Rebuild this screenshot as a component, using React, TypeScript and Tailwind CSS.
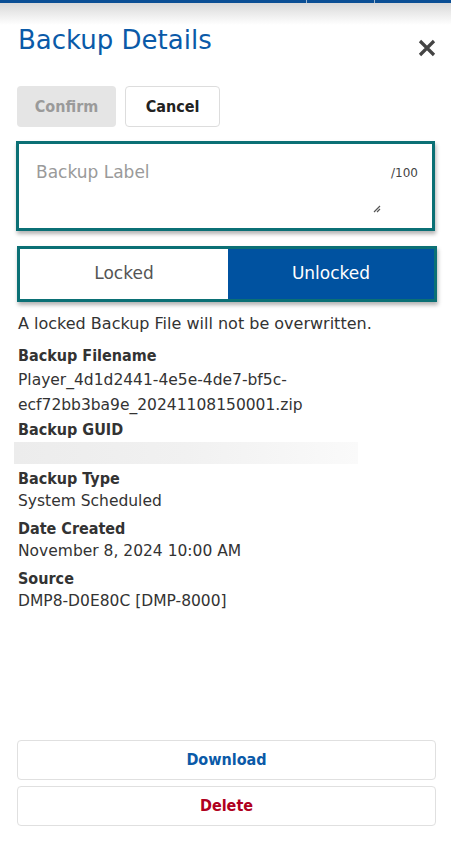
import React from "react";

const font = { fontFamily: '"DejaVu Sans", sans-serif' };
const bold = "[font-family:'DejaVu_Sans_Condensed','DejaVu_Sans',sans-serif] font-bold";

function Field({ label, children }: { label: string; children: React.ReactNode }) {
  return (
    <div className="mt-[6px] first:mt-0">
      <div className={`${bold} text-[16px] leading-[22px] text-[#333]`}>{label}</div>
      <div className="text-[15.5px] leading-[22px] text-[#333]">{children}</div>
    </div>
  );
}

export default function App() {
  return (
    <div className="w-[451px] h-[841px] bg-white flex flex-col relative overflow-hidden" style={font}>
      <div className="h-[3px] bg-[#0b4f95] flex shrink-0">
        <div className="w-[306px]" />
        <div className="w-px bg-[#9fb5cc]" />
        <div className="w-[67px]" />
        <div className="w-px bg-[#9fb5cc]" />
      </div>
      <div className="h-[22px] shrink-0 bg-gradient-to-b from-[#d9d9d9] to-white" />
      <div className="flex justify-between items-start px-[18px]">
        <div className="text-[26px] leading-[32px] text-[#0a5aa8] mt-[-1px]">Backup Details</div>
        <svg width="20" height="20" viewBox="0 0 20 20" className="mt-[13px] mr-[-4px]">
          <path d="M3 3 L17 17 M17 3 L3 17" stroke="#444" strokeWidth="3.2" strokeLinecap="butt" />
        </svg>
      </div>
      <div className="flex gap-[9px] px-[17px] mt-[28px]">
        <button className={`${bold} h-[41px] w-[99px] rounded-[4px] bg-[#e5e5e5] text-[#9a9a9a] text-[16px]`}>Confirm</button>
        <button className={`${bold} h-[41px] w-[95px] rounded-[4px] bg-white border border-[#dddddd] text-[#222] text-[16px]`}>Cancel</button>
      </div>
      <div className="ml-[16px] mr-[16px] mt-[14px] h-[90px] border-[3px] border-[#0b7075] shadow-[1px_3px_4px_rgba(0,0,0,0.3)] relative">
        <div className="absolute left-[17px] top-[16px] text-[17px] text-[#9a9a9a]">Backup Label</div>
        <div className="absolute right-[14px] top-[20px] text-[12px] text-[#444]">/100</div>
        <svg width="8" height="8" viewBox="0 0 8 8" className="absolute left-[354px] top-[61px]">
          <path d="M1 7 L7 1 M4 7 L7 4" stroke="#555" strokeWidth="1.2" />
        </svg>
      </div>
      <div className="ml-[17px] mr-[14px] mt-[15px] h-[56px] border-[3px] border-[#0b7075] shadow-[1px_3px_4px_rgba(0,0,0,0.3)] flex">
        <div className="w-[208px] flex items-center justify-center text-[17px] text-[#555] bg-white">Locked</div>
        <div className="flex-1 flex items-center justify-center text-[17px] text-white bg-[#0052a0]">Unlocked</div>
      </div>
      <div className="px-[18px] mt-[10px] text-[16px] leading-[24px] text-[#333]">A locked Backup File will not be overwritten.</div>
      <div className="px-[18px] mt-[8px]">
        <div className={`${bold} text-[16px] leading-[24px] text-[#333]`}>Backup Filename</div>
        <div className="text-[15.5px] leading-[25px] text-[#333]">
          Player_4d1d2441-4e5e-4de7-bf5c-
          <br />
          ecf72bb3ba9e_20241108150001.zip
        </div>
        <div className={`${bold} text-[16px] leading-[24px] text-[#333]`}>Backup GUID</div>
        <div className="ml-[-4px] h-[22px] w-[344px] bg-gradient-to-r from-[#ececec] via-[#f1f1f1] to-[#fafafa]" />
        <div className="mt-[4px]">
          <Field label="Backup Type">System Scheduled</Field>
          <Field label="Date Created">November 8, 2024 10:00 AM</Field>
          <Field label="Source">DMP8-D0E80C [DMP-8000]</Field>
        </div>
      </div>
      <div className="mt-auto pl-[17px] pr-[15px] pb-[15px] flex flex-col gap-[6px]">
        <button className={`${bold} h-[40px] w-full rounded-[4px] border border-[#e0e0e0] bg-white text-[16px] text-[#0a5aa8]`}>Download</button>
        <button className={`${bold} h-[40px] w-full rounded-[4px] border border-[#e0e0e0] bg-white text-[16px] text-[#b00020]`}>Delete</button>
      </div>
    </div>
  );
}
